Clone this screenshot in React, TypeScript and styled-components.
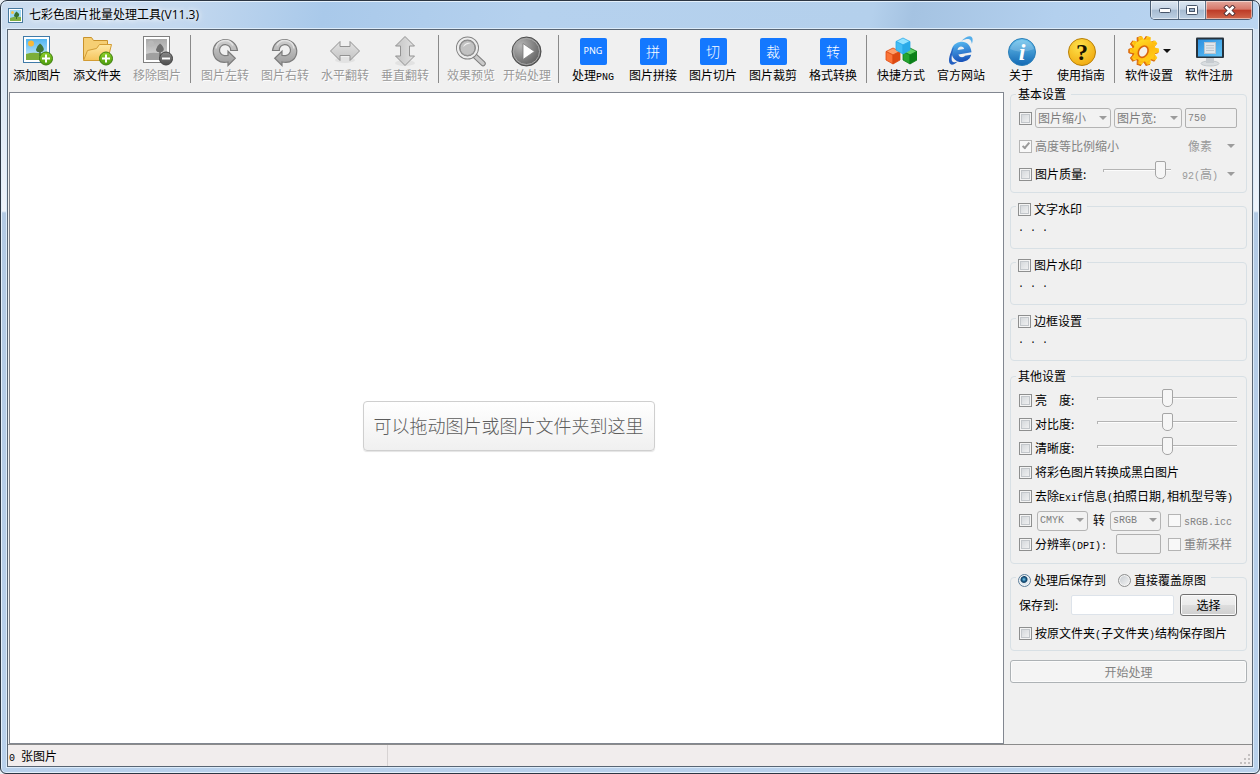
import React from "react";
import styled, { createGlobalStyle, css } from "styled-components";

const cjk = '"Noto Sans CJK SC", sans-serif';

const GlobalStyle = createGlobalStyle`
  *, *::before, *::after { box-sizing: border-box; }
  html, body, #root { height: 100%; }
  body { margin: 0; background: #e9eef4; color: #000; font: 12px/16px ${cjk}; }
  button, input, select { font: inherit; color: inherit; margin: 0; }
`;

/* ---------- window frame ---------- */

const Shell = styled.div`
  display: flex;
  flex-direction: column;
  min-height: 100%;
  padding: 0 6px 6px;
  border: 1px solid #2c3643;
  border-radius: 7px 7px 6px 6px;
  box-shadow: inset 0 0 0 1px #e4f0fb;
  background:
    linear-gradient(100deg, #cbdcef 0, #c3d8ef 180px, #a9c9ea 320px, #b5d1ee 520px, #b4d0ec 860px, #a5c3e2 900px, #b3d0ee 1040px, #bcd6f1 100%) top / 100% 28px no-repeat,
    linear-gradient(#cfdff0 0, #eef3fa 210px, #b3cae4 212px, #b9d1ec 100%);
`;

const TitleBar = styled.header`
  display: flex;
  align-items: center;
  gap: 6px;
  height: 28px;
  padding-left: 1px;
`;

const Title = styled.h1`
  flex: 1;
  margin: 0;
  font: 400 12px/16px "Open Sans", ${cjk};
  text-shadow: 0 0 5px #fff, 0 0 8px #fff;
`;

const WindowButtons = styled.div`
  display: flex;
  align-self: flex-start;
  height: 19px;
  border: 1px solid #4d5f74;
  border-top: 0;
  border-radius: 0 0 5px 5px;
  overflow: hidden;
`;

const WindowButton = styled.button<{ $close?: boolean }>`
  display: grid;
  place-items: center;
  width: ${(p) => (p.$close ? 47 : 27)}px;
  padding: 0;
  border: 0;
  border-left: 1px solid #5f7389;
  box-shadow: inset 0 0 0 1px rgba(255, 255, 255, 0.5);
  background: ${(p) =>
    p.$close
      ? "linear-gradient(#e3a79c 0, #d6786a 46%, #bd3a26 50%, #d1684c 100%)"
      : "linear-gradient(#dce7f2 0, #c6d5e5 46%, #a6bbd1 50%, #bdd0e3 100%)"};
  &:first-child { border-left: 0; }
`;

const Client = styled.div`
  flex: 1;
  display: flex;
  flex-direction: column;
  padding: 1px 0;
  background: #f0f0f0;
  box-shadow: inset 0 0 0 1px #596573, 0 0 0 1px #dcebf9;
`;

/* ---------- toolbar ---------- */

const Toolbar = styled.nav`
  display: flex;
  height: 56px;
  padding-top: 5px;
`;

const Tool = styled.button<{ $narrow?: boolean }>`
  flex: none;
  display: flex;
  flex-direction: column;
  align-items: center;
  width: ${(p) => (p.$narrow ? 56 : 60)}px;
  height: 48px;
  padding: 0;
  border: 0;
  background: none;
  white-space: nowrap;
  &:disabled { color: #999; text-shadow: 1px 1px 0 #fff; }
`;

const ToolIcon = styled.span`
  flex: none;
  display: flex;
  align-items: center;
  justify-content: center;
  gap: 4px;
  height: 32px;
`;

const Divider = styled.span`
  flex: none;
  width: 8px;
  height: 48px;
  background: linear-gradient(#8a8a8a, #8a8a8a) 3px 0 / 1px 100% no-repeat;
`;

const Tile = styled.span<{ $latin?: boolean }>`
  display: grid;
  place-items: center;
  width: 27px;
  height: 27px;
  border-radius: 2px;
  background: #1478ff;
  color: #fff;
  font-family: ${(p) => (p.$latin ? '"Noto Sans", sans-serif' : cjk)};
  font-size: ${(p) => (p.$latin ? 9 : 14)}px;
  font-weight: ${(p) => (p.$latin ? 400 : 300)};
`;

const Latin = styled.span`
  font-family: "Liberation Mono", monospace;
  font-size: 10px;
  line-height: 1;
`;

/* ---------- main area ---------- */

const Main = styled.main`
  flex: 1;
  display: flex;
`;

const Canvas = styled.section`
  flex: 1;
  display: flex;
  align-items: center;
  justify-content: center;
  margin: 6px 0 0 2px;
  padding: 16px 0 0 4px;
  border: 1px solid #828790;
  background: #fff;
`;

const DropHint = styled.p`
  margin: 0;
  padding: 11px 10px 13px;
  border: 1px solid #cfcfcf;
  border-radius: 4px;
  background: linear-gradient(#fff, #f0f0f0);
  box-shadow: 0 1px 1px #e4e4e4;
  color: #5c5c5c;
  font-size: 18px;
  font-weight: 300;
  line-height: 24px;
`;

const Side = styled.aside`
  flex: none;
  width: 249px;
  padding: 0 6px 12px;
`;

const Group = styled.fieldset<{ $gap?: number; $pad?: string }>`
  min-width: 0;
  margin: ${(p) => p.$gap ?? 3}px 0 0;
  padding: ${(p) => p.$pad ?? "0"};
  border: 1px solid #d8e0e5;
  border-radius: 4px;
`;

const Legend = styled.legend<{ $drop?: boolean }>`
  display: flex;
  gap: 12px;
  margin-left: 5px;
  padding: ${(p) => (p.$drop ? "5px 5px 0 2px" : "0 5px 0 2px")};
`;

const Row = styled.div<{ $h: number; $gap?: number }>`
  display: flex;
  align-items: center;
  gap: ${(p) => p.$gap ?? 3}px;
  height: ${(p) => p.$h}px;
  padding: 0 9px 0 8px;
`;

const Note = styled.p`
  margin: 0;
  padding: 4px 7px 11px;
  font: 10px/16px "Liberation Mono", monospace;
`;

const Check = styled.label<{ $off?: boolean }>`
  display: flex;
  align-items: center;
  gap: 3px;
  white-space: nowrap;
  color: ${(p) => (p.$off ? "#838383" : "#000")};
`;

const Box = styled.input.attrs({ type: "checkbox" })`
  appearance: none;
  flex: none;
  display: grid;
  place-items: center;
  width: 13px;
  height: 13px;
  border: 1px solid #8e8f8f;
  box-shadow: inset 0 0 0 1px #f4f4f4, inset 0 0 0 2px #c3c7cb;
  background: linear-gradient(135deg, #cfd3d7, #f6f6f6);
  &:disabled { border-color: #b4b4b4; background: #f8f8f8; box-shadow: none; }
  &:checked::after {
    content: "";
    width: 4px;
    height: 8px;
    margin-top: -2px;
    border: solid #9a9a9a;
    border-width: 0 2px 2px 0;
    transform: rotate(40deg);
  }
`;

const Radio = styled.input.attrs({ type: "radio" })`
  appearance: none;
  flex: none;
  width: 13px;
  height: 13px;
  border: 1px solid #8e8f8f;
  border-radius: 50%;
  box-shadow: inset 0 0 0 1px #f4f4f4;
  background: linear-gradient(135deg, #c4c9ce, #f6f6f6);
  &:checked {
    border-color: #5d7f9c;
    background: radial-gradient(circle at 45% 40%, #7fd0f0 0, #1c5f8c 2px, #123f63 3px, #dfe9f0 4px);
  }
`;

const SelectWrap = styled.span<{ $w: number; $flat?: boolean }>`
  position: relative;
  flex: none;
  width: ${(p) => p.$w}px;
  height: 20px;
  color: ${(p) => (p.$flat ? "#9a9a9a" : "#7d7d7d")};
  svg { position: absolute; right: ${(p) => (p.$flat ? 2 : 4)}px; top: 8px; pointer-events: none; }
`;

const Select = styled.select<{ $flat?: boolean; $latin?: boolean }>`
  appearance: none;
  width: 100%;
  height: 20px;
  padding: 0 0 0 2px;
  border: 1px solid #b4b4b4;
  border-radius: 3px;
  background: #f2f2f2;
  &:disabled { opacity: 1; color: inherit; }
  ${(p) => p.$flat && css`border-color: transparent; background: none; padding: 0;`}
  ${(p) => p.$latin && css`font-family: "Liberation Mono", monospace; font-size: 10px;`}
`;

const TextBox = styled.input<{ $w?: number }>`
  ${(p) => (p.$w ? css`flex: none; width: ${p.$w}px;` : css`flex: 1; min-width: 0;`)}
  height: 20px;
  padding: 0 2px;
  border: 1px solid #dde3ea;
  border-radius: 2px;
  background: #fff;
  font: 10px/16px "Liberation Mono", monospace;
  &:disabled { border-color: #b0b0b0; background: #f0f0f0; color: #838383; }
`;

const Slider = styled.input.attrs({ type: "range" })<{ $w: number }>`
  appearance: none;
  align-self: flex-start;
  width: ${(p) => p.$w}px;
  height: 20px;
  margin-left: auto;
  background: linear-gradient(#b4b4b4, #b4b4b4) 0 9px / 100% 1px no-repeat,
    linear-gradient(#b4b4b4, #b4b4b4) 0 9px / 1px 3px no-repeat,
    linear-gradient(#fcfcfc, #fcfcfc) 0 10px / 100% 1px no-repeat;
  &::-webkit-slider-thumb {
    appearance: none;
    width: 11px;
    height: 18px;
    border: 1px solid #a5a5a5;
    border-radius: 2px 2px 5px 5px;
    background: #f6f6f6;
  }
`;

const Trail = styled.div`
  display: grid;
  grid-template-columns: 51px 69px;
  gap: 7px;
  align-items: center;
  margin-left: auto;
  & > input { justify-self: end; }
`;

const PushButton = styled.button<{ $wide?: boolean }>`
  flex: none;
  width: ${(p) => (p.$wide ? "100%" : "57px")};
  height: ${(p) => (p.$wide ? 23 : 22)}px;
  padding: 0;
  border: 1px solid #707070;
  border-radius: 3px;
  box-shadow: inset 0 0 0 1px #fbfbfb;
  background: linear-gradient(#f2f2f2 0, #ebebeb 49%, #dddddd 51%, #cfcfcf 100%);
  &:disabled { border-color: #adb2b5; background: #f4f4f4; color: #838383; }
`;

const StartArea = styled.div`
  display: flex;
  margin-top: 9px;
`;

const StatusBar = styled.footer`
  display: flex;
  align-items: stretch;
  height: 22px;
  margin: 0 1px;
  border-top: 1px solid #8b8b8b;
  background: #f1eded;
`;

const StatusCell = styled.div`
  width: 380px;
  padding: 3px 1px 2px;
  border-right: 1px solid #d7d3d3;
`;

const Grip = styled.svg`
  margin: auto 2px 2px auto;
`;

const SelectSlot = styled.div`
  display: flex;
  margin-left: auto;
`;

const QualityButton = styled.button`
  display: flex;
  align-items: center;
  justify-content: space-between;
  width: 63px;
  padding: 0 2px 0 8px;
  border: 0;
  background: none;
  color: #9a9a9a;
  white-space: nowrap;
`;

const SaveLabel = styled.label`
  width: 46px;
`;

/* ---------- drawings ---------- */

const Arrow = ({ w = 8, fill = "#8f8f8f" }: { w?: number; fill?: string }) => (
  <svg width={w} height="4" viewBox="0 0 8 4">
    <path d="M0 0h8L4 4z" fill={fill} />
  </svg>
);

const Svg = ({ children }: { children: React.ReactNode }) => (
  <svg width="32" height="32" viewBox="0 0 32 32" aria-hidden="true">{children}</svg>
);

const HiddenSvg = styled.svg`
  position: absolute;
`;

const Defs = () => (
  <HiddenSvg width="0" height="0" aria-hidden="true">
    <defs>
      <linearGradient id="sky" x2="0" y2="1"><stop stopColor="#4fb4f2" /><stop offset="1" stopColor="#d8f1fd" /></linearGradient>
      <linearGradient id="graySky" x2="0" y2="1"><stop stopColor="#a9a9a9" /><stop offset="1" stopColor="#dedede" /></linearGradient>
      <linearGradient id="steel" x2="0" y2="1"><stop stopColor="#cfcfcf" /><stop offset="1" stopColor="#9c9c9c" /></linearGradient>
      <linearGradient id="pale" x2="0" y2="1"><stop stopColor="#e2e2e2" /><stop offset="1" stopColor="#c4c4c4" /></linearGradient>
      <linearGradient id="folder" x2="0" y2="1"><stop stopColor="#ffe9a6" /><stop offset="1" stopColor="#f5c45c" /></linearGradient>
      <linearGradient id="greenBall" x2="0" y2="1"><stop stopColor="#8fd02a" /><stop offset="1" stopColor="#4a9a0c" /></linearGradient>
      <linearGradient id="grayBall" x2="0" y2="1"><stop stopColor="#8a8a8a" /><stop offset="1" stopColor="#4d4d4d" /></linearGradient>
      <radialGradient id="playBall" cx=".3" cy=".3" r=".8"><stop stopColor="#b5b5b5" /><stop offset="1" stopColor="#5c5c5c" /></radialGradient>
      <linearGradient id="info" x2="0" y2="1"><stop stopColor="#6cc4ee" /><stop offset="1" stopColor="#1268b4" /></linearGradient>
      <radialGradient id="help" cx=".4" cy=".3" r=".8"><stop stopColor="#ffe24a" /><stop offset="1" stopColor="#efa50c" /></radialGradient>
      <linearGradient id="gear" x2="1" y2="1"><stop stopColor="#ffe92e" /><stop offset=".5" stopColor="#ffb90f" /><stop offset="1" stopColor="#ffd51c" /></linearGradient>
      <linearGradient id="gearEdge" x2="1" y2="0"><stop stopColor="#e05a08" /><stop offset="1" stopColor="#f3a410" /></linearGradient>
      <linearGradient id="screen" x2="1" y2="1"><stop stopColor="#2b8fe0" /><stop offset="1" stopColor="#63c4f6" /></linearGradient>
      <linearGradient id="ie" x2="0" y2="1"><stop stopColor="#53b4ee" /><stop offset="1" stopColor="#1650b8" /></linearGradient>
    </defs>
  </HiddenSvg>
);

const Ball = ({ x, gray }: { x: number; gray?: boolean }) => (
  <g>
    <circle cx={x} cy="23.500" r="6.500" fill={gray ? "url(#grayBall)" : "url(#greenBall)"} stroke={gray ? "#404040" : "#3c7d0b"} />
    <path d={gray ? `M${x - 4} 23.500h8` : `M${x - 4} 23.500h8M${x} 19.500v8`} stroke="#fff" strokeWidth="2" />
  </g>
);

const Picture = ({ gray }: { gray?: boolean }) => (
  <Svg>
    <rect x="2.500" y="1.500" width="26" height="26" fill="#fff" stroke={gray ? "#7f7f7f" : "#3f7aa8"} />
    <rect x="5" y="4" width="21" height="21" fill={gray ? "url(#graySky)" : "url(#sky)"} />
    <circle cx="10" cy="8.500" r="3" fill={gray ? "#b9b9b9" : "#f7b83a"} />
    <path d="M5 19q6-2 12-1t9-1v8H5z" fill={gray ? "#a0a0a0" : "#7cae3a"} />
    <path d="M19 8.500q4 3 3.800 6.500-.6 2-3 2.200V21h-1.600v-3.800q-3.200-.2-3.200-2.700.6-3.500 4-6z" fill={gray ? "#6d6d6d" : "#3f7433"} />
    <Ball x={25} gray={gray} />
  </Svg>
);

const Folder = () => (
  <Svg>
    <path d="M2.500 2.500h8l2 3h14v4h2l-3 15h-23z" fill="#f6cf74" stroke="#c8922c" />
    <path d="M2.500 25.500l4-10 9-2 3-4h12l-4 16z" fill="url(#folder)" stroke="#d39c33" strokeLinejoin="round" />
    <Ball x={25} />
  </Svg>
);

const Rotate = ({ right }: { right?: boolean }) => (
  <Svg>
    <g transform={right ? "matrix(-1 0 0 1 32 0)" : undefined}>
      <path d="M28.500 15.500h-6.800a5.600 5.600 0 1 0-6.200 5.200l3.500-.2v-4.300l7.300 7-7.300 7.300v-3.500c-9 2-14.800-3.500-14.800-11.300a12.200 12.200 0 0 1 24.300-.2z" fill="url(#steel)" stroke="#7c7c7c" strokeWidth="1.200" />
      <path d="M7 13.500a9 9 0 0 1 17-3" fill="none" stroke="#e2e2e2" strokeWidth="1.500" />
    </g>
  </Svg>
);

const Flip = ({ vertical }: { vertical?: boolean }) => (
  <Svg>
    <ellipse cx="16" cy={vertical ? 28 : 25} rx="10" ry="3" fill="#e2e2e2" />
    <path
      transform={vertical ? "rotate(90 16 16)" : undefined}
      d="M1.500 16l9.500-9.500v5h10v-5l9.500 9.500-9.500 9.500v-5H11v5z"
      fill="url(#pale)"
      stroke="#929292"
    />
  </Svg>
);

const Magnifier = () => (
  <Svg>
    <path d="M20 21l8 7.500" stroke="#7d7d7d" strokeWidth="5.500" strokeLinecap="round" />
    <path d="M20 21l8 7.500" stroke="#c9c9c9" strokeWidth="3.500" strokeLinecap="round" />
    <circle cx="12.500" cy="13" r="9.500" fill="#c5c5c5" stroke="#808080" strokeWidth="4" />
    <circle cx="12.500" cy="13" r="9.500" fill="none" stroke="#ececec" strokeWidth="2.200" />
    <circle cx="12.500" cy="13" r="7.500" fill="#c2c2c2" stroke="#8b8b8b" />
    <path d="M8 12q2-5 8-4-5 1-8 4z" fill="#f1f1f1" />
  </Svg>
);

const Play = () => (
  <Svg>
    <circle cx="15.500" cy="16.500" r="14.500" fill="url(#playBall)" stroke="#4b4b4b" />
    <circle cx="15.500" cy="16.500" r="13" fill="none" stroke="#aaa" />
    <path d="M12 8.500l11.500 8-11.500 8z" fill="#fff" stroke="#7a7a7a" strokeWidth=".8" />
  </Svg>
);

const Cube = ({ x, y, c }: { x: number; y: number; c: [string, string, string] }) => (
  <g transform={`translate(${x} ${y})`} strokeLinejoin="round" strokeWidth=".8" stroke={c[2]}>
    <path d="M0-8l7 3.500L0-1l-7-3.500z" fill={c[0]} />
    <path d="M-7-4.500L0-1v9l-7-4z" fill={c[1]} />
    <path d="M7-4.500L0-1v9l7-4z" fill={c[2]} />
  </g>
);

const Cubes = () => (
  <Svg>
    <Cube x={8} y={21} c={["#ff9d68", "#fb7437", "#dd4a12"]} />
    <Cube x={25} y={21} c={["#5fd062", "#25a52f", "#0b8018"]} />
    <Cube x={18} y={11} c={["#93e2ff", "#43bdf5", "#2aaae8"]} />
  </Svg>
);

const Browser = () => (
  <Svg>
    <g transform="rotate(-10 16 17)">
      <path d="M25.500 21.500h-6.200c-1.200 1.400-5.600 1.600-6.300-2.500h13.300C27 11.500 22.800 7 16.600 7 10.800 7 6.500 11.200 6.500 17s4.300 10 10 10c4.300 0 7.600-2 9-5.500zM13 14.500c.8-3.800 6-3.800 6.700 0z" fill="url(#ie)" fillRule="evenodd" />
      <path d="M10 10.500C5 15.500 1.500 23 3 26.500c1.200 2.600 5.200 1.200 8.500-1-2.800.8-5.200.9-5.800-.8-.8-2.200.8-7.500 4.300-14.200z" fill="#2460c0" />
      <path d="M18.500 6c4-2.800 9-4 10.600-2 1.200 1.600.4 4.400-1 7 .1-2.500-.2-4.500-1.800-5.200-1.700-.8-4.600-.6-7.800.2z" fill="#54aeea" />
    </g>
  </Svg>
);

const Info = () => (
  <Svg>
    <circle cx="17" cy="17" r="13.500" fill="url(#info)" stroke="#2b7fb8" />
    <path d="M5 14a12.500 12.500 0 0 1 24 0q-12 5-24 0z" fill="#fff" opacity=".18" />
    <text x="17" y="25" textAnchor="middle" fill="#fff" fontFamily="Liberation Serif" fontStyle="italic" fontWeight="700" fontSize="24">i</text>
  </Svg>
);

const Help = () => (
  <Svg>
    <circle cx="17" cy="17" r="13.500" fill="url(#help)" stroke="#b98008" />
    <text x="17" y="25" textAnchor="middle" fill="#1a1200" fontFamily="Liberation Serif" fontWeight="700" fontSize="24">?</text>
  </Svg>
);

const teeth = Array.from({ length: 10 }, (_, i) => i * 36);

const Gear = () => (
  <Svg>
    <g transform="rotate(18 16 17)">
      {[0, 1].map((layer) => (
        <g key={layer} transform={layer ? "translate(1 -1)" : undefined} fill={layer ? "url(#gear)" : "url(#gearEdge)"} stroke={layer ? "none" : "#d9690b"}>
          {teeth.map((a) => (
            <path key={a} d="M13 6l1.200-4.500h3.600L19 6z" transform={`rotate(${a} 16 16)`} />
          ))}
          <circle cx="16" cy="16" r="11" />
        </g>
      ))}
    </g>
    <ellipse cx="16.500" cy="16.500" rx="4.500" ry="6" transform="rotate(30 16 16)" fill="#f4f0ea" stroke="#d9650c" strokeWidth="1.600" />
  </Svg>
);

const Monitor = () => (
  <Svg>
    <ellipse cx="17" cy="28.500" rx="9" ry="2.500" fill="#d9dde0" stroke="#b4babf" strokeWidth=".7" />
    <path d="M13 23h8v5h-8z" fill="#c6cbd0" />
    <rect x="3" y="2.500" width="28" height="20.500" rx="1" fill="#26323d" />
    <rect x="5" y="4.500" width="24" height="17" fill="url(#screen)" />
    <rect x="11.500" y="7.500" width="11" height="11" fill="#dfe5ea" stroke="#b9c4cd" />
    <path d="M13 10.500h8M13 13h8M13 15.500h8" stroke="#bcc4cb" />
  </Svg>
);

const AppIcon = () => (
  <svg width="15" height="15" viewBox="0 0 15 15" aria-hidden="true">
    <rect x=".5" y=".5" width="14" height="14" fill="#fff" stroke="#47799e" />
    <rect x="2" y="2" width="11" height="11" fill="#9fd8f5" />
    <circle cx="4.500" cy="4.500" r="1.500" fill="#f3c34d" />
    <path d="M2 10q5-2 11-1v4H2z" fill="#7fae43" />
    <path d="M8.500 3.500q3 2 2.500 4-.5 1.500-2 1.500v2H8V9Q6 9 6 7.500q.5-2.500 2.500-4z" fill="#38702f" />
  </svg>
);

/* ---------- composed controls ---------- */

type ToolDef = { label: React.ReactNode; icon: React.ReactNode; off?: boolean; menu?: boolean; narrow?: boolean };

const tools: ToolDef[][] = [
  [
    { label: "添加图片", icon: <Picture /> },
    { label: "添文件夹", icon: <Folder /> },
    { label: "移除图片", icon: <Picture gray />, off: true },
  ],
  [
    { label: "图片左转", icon: <Rotate />, off: true },
    { label: "图片右转", icon: <Rotate right />, off: true },
    { label: "水平翻转", icon: <Flip />, off: true },
    { label: "垂直翻转", icon: <Flip vertical />, off: true },
  ],
  [
    { label: "效果预览", icon: <Magnifier />, off: true, narrow: true },
    { label: "开始处理", icon: <Play />, off: true, narrow: true },
  ],
  [
    { label: <span>处理<Latin>PNG</Latin></span>, icon: <Tile $latin>PNG</Tile> },
    { label: "图片拼接", icon: <Tile>拼</Tile> },
    { label: "图片切片", icon: <Tile>切</Tile> },
    { label: "图片裁剪", icon: <Tile>裁</Tile> },
    { label: "格式转换", icon: <Tile>转</Tile> },
  ],
  [
    { label: "快捷方式", icon: <Cubes /> },
    { label: "官方网站", icon: <Browser /> },
    { label: "关于", icon: <Info /> },
    { label: "使用指南", icon: <Help /> },
  ],
  [
    { label: "软件设置", icon: <Gear />, menu: true },
    { label: "软件注册", icon: <Monitor /> },
  ],
];

const Drop = ({ w, name, value, flat, latin }: { w: number; name: string; value: string; flat?: boolean; latin?: boolean }) => (
  <SelectWrap $w={w} $flat={flat}>
    <Select disabled aria-label={name} $flat={flat} $latin={latin}>
      <option>{value}</option>
    </Select>
    <Arrow fill="#9c9c9c" />
  </SelectWrap>
);

const Option = ({ children, off, on }: { children: React.ReactNode; off?: boolean; on?: boolean }) => (
  <Check $off={off}>
    <Box disabled={off} defaultChecked={on} />
    <span>{children}</span>
  </Check>
);

const adjustments = ["亮　度", "对比度", "清晰度"];

export default function App() {
  return (
    <Shell>
      <GlobalStyle />
      <Defs />
      <TitleBar>
        <AppIcon />
        <Title>七彩色图片批量处理工具(V11.3)</Title>
        <WindowButtons>
          <WindowButton aria-label="最小化">
            <svg width="12" height="5"><rect x=".5" y=".5" width="11" height="4" rx="1" fill="#fff" stroke="#48566a" /></svg>
          </WindowButton>
          <WindowButton aria-label="最大化">
            <svg width="12" height="10"><rect x=".5" y=".5" width="11" height="9" rx="1" fill="#fff" stroke="#48566a" /><rect x="3.500" y="3.500" width="5" height="3" fill="#9fb4cc" stroke="#48566a" /></svg>
          </WindowButton>
          <WindowButton $close aria-label="关闭">
            <svg width="13" height="11" viewBox="0 0 13 11"><path d="M3.500 2.500l6 6M9.500 2.500l-6 6" stroke="#54363a" strokeWidth="4.500" strokeLinecap="square" /><path d="M3.500 2.500l6 6M9.500 2.500l-6 6" stroke="#fff" strokeWidth="2.600" strokeLinecap="square" /></svg>
          </WindowButton>
        </WindowButtons>
      </TitleBar>

      <Client>
        <Toolbar>
          {tools.map((group, g) => (
            <React.Fragment key={g}>
              {g > 0 && <Divider />}
              {group.map((tool, i) => (
                <Tool key={i} disabled={tool.off} $narrow={tool.narrow}>
                  <ToolIcon>
                    {tool.icon}
                    {tool.menu && <Arrow fill="#111" />}
                  </ToolIcon>
                  {tool.label}
                </Tool>
              ))}
            </React.Fragment>
          ))}
        </Toolbar>

        <Main>
          <Canvas>
            <DropHint>可以拖动图片或图片文件夹到这里</DropHint>
          </Canvas>

          <Side>
            <Group $gap={0} $pad="2px 0 4px">
              <Legend>基本设置</Legend>
              <Row $h={28}>
                <Box aria-label="图片缩小" />
                <Drop w={76} name="缩放方式" value="图片缩小" />
                <Drop w={68} name="尺寸依据" value="图片宽:" />
                <TextBox $w={52} disabled defaultValue="750" aria-label="图片宽" />
              </Row>
              <Row $h={28}>
                <Option off on>高度等比例缩小</Option>
                <SelectSlot><Drop w={50} name="单位" value="像素" flat /></SelectSlot>
              </Row>
              <Row $h={28}>
                <Option>图片质量:</Option>
                <Slider $w={68} disabled min={0} max={100} defaultValue={92} aria-label="图片质量" />
                <QualityButton>
                  <span><Latin>92(</Latin>高<Latin>)</Latin></span>
                  <Arrow fill="#9c9c9c" />
                </QualityButton>
              </Row>
            </Group>

            {["文字水印", "图片水印", "边框设置"].map((name) => (
              <Group key={name} $pad="0">
                <Legend $drop><Option>{name}</Option></Legend>
                <Note>. . .</Note>
              </Group>
            ))}

            <Group $gap={7} $pad="4px 0 7px">
              <Legend>其他设置</Legend>
              {adjustments.map((name) => (
                <Row $h={24} key={name}>
                  <Option>{name}:</Option>
                  <Slider $w={140} disabled min={0} max={100} defaultValue={50} aria-label={name} />
                </Row>
              ))}
              <Row $h={24}><Option>将彩色图片转换成黑白图片</Option></Row>
              <Row $h={24}>
                <Option>去除<Latin>Exif</Latin>信息<Latin>(</Latin>拍照日期<Latin>,</Latin>相机型号等<Latin>)</Latin></Option>
              </Row>
              <Row $h={24} $gap={5}>
                <Box aria-label="色彩空间转换" />
                <Drop w={51} name="源色彩空间" value="CMYK" latin />
                <span>转</span>
                <Trail>
                  <Drop w={51} name="目标色彩空间" value="sRGB" latin />
                  <Option off><Latin>sRGB.icc</Latin></Option>
                </Trail>
              </Row>
              <Row $h={24}>
                <Option>分辨率<Latin>(DPI):</Latin></Option>
                <Trail>
                  <TextBox $w={45} disabled aria-label="分辨率" />
                  <Option off>重新采样</Option>
                </Trail>
              </Row>
            </Group>

            <Group $pad="3px 0">
              <Legend $drop>
                <Check><Radio name="target" defaultChecked />处理后保存到</Check>
                <Check><Radio name="target" />直接覆盖原图</Check>
              </Legend>
              <Row $h={28} $gap={6}>
                <SaveLabel htmlFor="folder-path">保存到:</SaveLabel>
                <TextBox id="folder-path" />
                <PushButton>选择</PushButton>
              </Row>
              <Row $h={28}>
                <Option>按原文件夹<Latin>(</Latin>子文件夹<Latin>)</Latin>结构保存图片</Option>
              </Row>
            </Group>

            <StartArea><PushButton $wide disabled>开始处理</PushButton></StartArea>
          </Side>
        </Main>

        <StatusBar>
          <StatusCell><Latin>0 </Latin>张图片</StatusCell>
          <Grip width="10" height="10" viewBox="0 0 10 10" fill="#c4c0c0">
            <path d="M8 0h2v2H8zM8 4h2v2H8zM8 8h2v2H8zM4 4h2v2H4zM4 8h2v2H4zM0 8h2v2H0z" />
          </Grip>
        </StatusBar>
      </Client>
    </Shell>
  );
}
